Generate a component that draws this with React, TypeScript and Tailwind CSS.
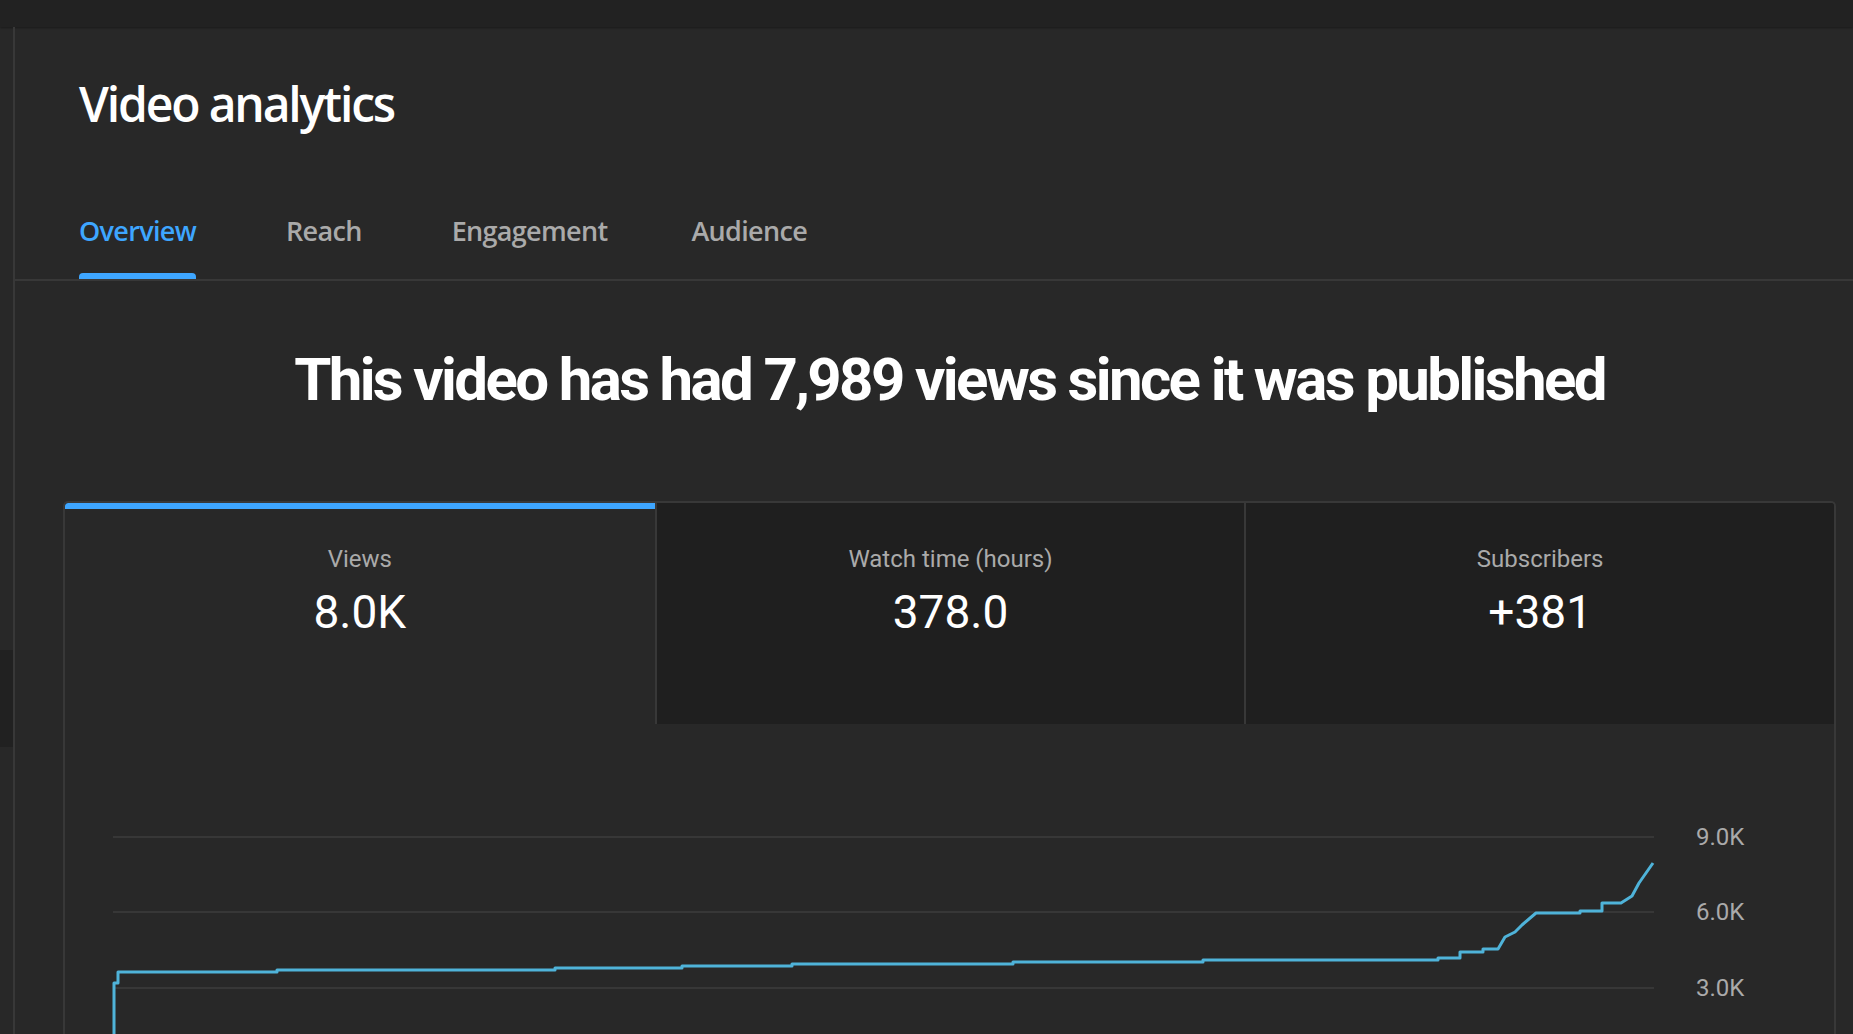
import React from "react";

const tabs = [
  { name: "Overview", gap: "" },
  { name: "Reach", gap: "ml-[90px]" },
  { name: "Engagement", gap: "ml-[90px]" },
  { name: "Audience", gap: "ml-[84px]" },
];

const metrics = [
  { label: "Views", value: "8.0K" },
  { label: "Watch time (hours)", value: "378.0" },
  { label: "Subscribers", value: "+381" },
];

// chart coords are local to the chart panel (page x - 65, page y - 724)
const viewsPath =
  "M49,330 V259 H53 V248 H212 V246 H490 V244 H617 V242 H727 V240 H948 V238 H1138 V236 H1373 V234 H1395 V228 H1418 V225 H1433 L1440,213 L1450,208 L1457,201 L1471,189 H1515 V187 H1537 V179 H1556 L1567,172 L1574,159 L1588,139";

const gridLines = [
  { y: 113, label: "9.0K" },
  { y: 188, label: "6.0K" },
  { y: 264, label: "3.0K" },
];

const App = () => {
  return (
    <div className="w-full h-[1034px] overflow-hidden bg-[#282828] flex flex-col">
      <div className="h-[27px] shrink-0 bg-[#222222] shadow-[0_1px_2px_rgba(0,0,0,0.35)]" />

      <div className="flex flex-1 min-h-0">
        {/* sidebar edge */}
        <div className="w-[13px] shrink-0 flex flex-col">
          <div className="mt-[623px] h-[97px] bg-[#212121]" />
        </div>

        <main className="flex-1 min-w-0 border-l-2 border-[#383838] flex flex-col">
          <h1
            className="mt-[53px] pl-[64px] text-[48px] leading-[48px] font-semibold text-white tracking-[-0.045em]"
            style={{ fontFamily: '"Open Sans", sans-serif' }}
          >
            Video analytics
          </h1>

          <div className="mt-[89px] border-b-2 border-[#383838]">
            <div className="flex pl-[64px]" style={{ fontFamily: '"Open Sans", sans-serif' }}>
              {tabs.map((tab, i) => (
                <div key={tab.name} className={"flex flex-col " + tab.gap}>
                  <span
                    className={
                      "text-[27px] leading-[27px] font-semibold tracking-[-0.025em] " +
                      (i === 0 ? "text-[#3ea6ff]" : "text-[#aaaaaa]")
                    }
                  >
                    {tab.name}
                  </span>
                  <div
                    className={
                      "mt-[29px] h-[6px] rounded-t-[4px] " +
                      (i === 0 ? "bg-[#3ea6ff]" : "bg-transparent")
                    }
                  />
                </div>
              ))}
            </div>
          </div>

          <p
            className="mt-[69px] text-center text-[60px] leading-[60px] font-bold text-white tracking-[-0.044em] pl-[31px]"
            style={{ fontFamily: "Roboto, sans-serif" }}
          >
            This video has had 7,989 views since it was published
          </p>

          <section
            className="mt-[91px] ml-[48px] mr-[17px] border-2 border-b-0 border-[#383838] rounded-t-[5px] overflow-hidden flex flex-col"
            style={{ fontFamily: "Roboto, sans-serif" }}
          >
            <div className="grid grid-cols-3">
              {metrics.map((m, i) => (
                <div
                  key={m.label}
                  className={
                    "flex flex-col items-center " +
                    (i === 0 ? "bg-[#282828]" : "bg-[#1f1f1f] border-l-2 border-[#383838]")
                  }
                >
                  <div className={"self-stretch h-[6px] " + (i === 0 ? "bg-[#3ea6ff] rounded-tl-[3px]" : "")} />
                  <span className="mt-[38px] text-[24px] leading-[24px] text-[#aaaaaa]">
                    {m.label}
                  </span>
                  <span className="mt-[18px] mb-[89px] text-[46px] leading-[46px] text-white">
                    {m.value}
                  </span>
                </div>
              ))}
            </div>

            <div className="h-[330px] bg-[#282828]">
              <svg width="100%" height="330" viewBox="0 0 1769 330" preserveAspectRatio="xMinYMin meet">
                {gridLines.map((g) => (
                  <g key={g.label}>
                    <line x1="48" x2="1589" y1={g.y} y2={g.y} stroke="#3d3d3d" strokeWidth="1.5" />
                    <text
                      x="1631"
                      y={g.y + 8}
                      fill="#aaaaaa"
                      fontSize="24"
                      fontFamily="Roboto, sans-serif"
                    >
                      {g.label}
                    </text>
                  </g>
                ))}
                <path
                  d={viewsPath}
                  fill="none"
                  stroke="#4fb3d9"
                  strokeWidth="3"
                  strokeLinejoin="round"
                />
              </svg>
            </div>
          </section>
        </main>
      </div>
    </div>
  );
};

export default App;
